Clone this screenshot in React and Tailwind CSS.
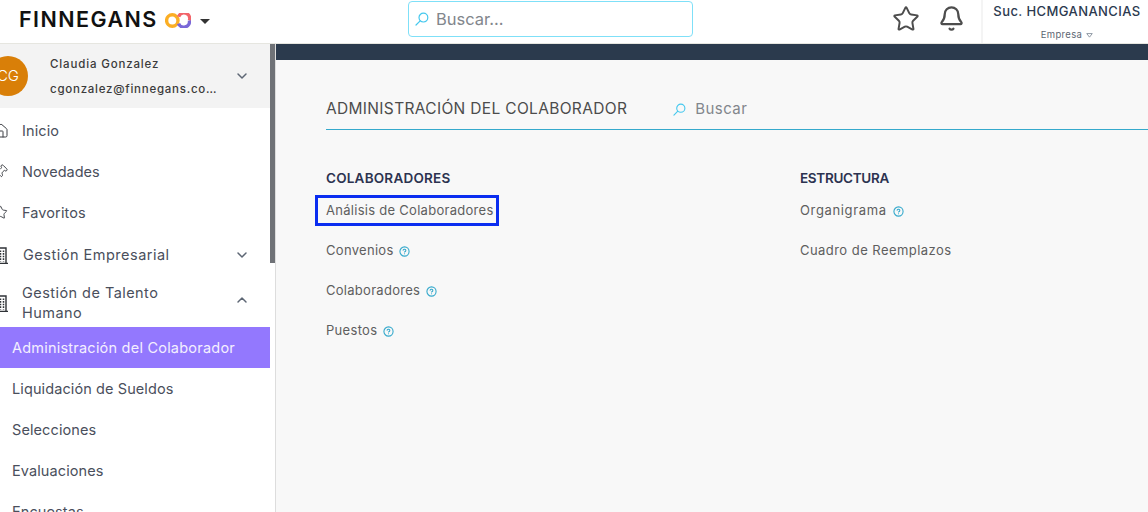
import React from "react";
import { Home, Pin, Star, Bell, ChevronDown, ChevronUp, CircleHelp } from "lucide-react";

function Lens({ className }) {
  return (
    <svg viewBox="0 0 14 14" fill="none" stroke="currentColor" strokeWidth="1.2" className={className}>
      <circle cx="8.4" cy="5.6" r="4.4" />
      <path d="M5.2 8.8 1 13" strokeLinecap="round" />
    </svg>
  );
}

function Logo() {
  return (
    <svg viewBox="0 0 26 15" className="h-[15px] w-[26px]" fill="none" strokeWidth="3.4">
      <circle cx="7.3" cy="7.5" r="5.7" stroke="#fbae24" />
      <path d="M13.6 3.8A5.7 5.7 0 0 1 24.4 7.5" stroke="#f2646a" />
      <path d="M24.4 7.5A5.7 5.7 0 0 1 13.5 10.6" stroke="#7a68d8" />
    </svg>
  );
}

function BuildingIcon({ className }) {
  return (
    <svg viewBox="0 0 15 17" className={className} fill="none" stroke="currentColor">
      <path d="M2 16.5V1h11v15.5M0 16.5h15" strokeWidth="1.4" />
      <path d="M4.5 3.5v11M7.5 3.5v11M10.5 3.5v11" strokeWidth="1.5" strokeDasharray="1.6 1" />
    </svg>
  );
}

function Row({ icon: Icon, label, labelClass = "tracking-[0.1px]", iconClass = "" }) {
  return (
    <div className="flex h-[41px] items-center text-[14.5px] text-[#4a4f5c]">
      <div className="ml-[-7px] flex w-[29px] shrink-0 items-center">
        <Icon className={`h-[15px] w-[15px] text-[#3c3f45] ${iconClass}`} strokeWidth={1.5} />
      </div>
      <span className={`min-w-0 flex-1 ${labelClass}`}>{label}</span>
    </div>
  );
}

function SubRow({ label, active }) {
  return (
    <div className={`flex h-[41px] items-center pl-3 text-[14.5px] ${active ? "bg-[#9378fe] tracking-[0.22px] text-[#f3efff]" : "tracking-[0.1px] text-[#4a4f5c]"}`}>
      {label}
    </div>
  );
}

function Item({ label, help, track = "tracking-[0.3px]", gap = "ml-[6px]" }) {
  return (
    <div className={`flex h-10 items-center text-[13px] text-[#5e5e5e] ${track}`}>
      <span>{label}</span>
      {help && <CircleHelp className={`${gap} h-[11px] w-[11px] text-[#35a9cc]`} strokeWidth={2.4} />}
    </div>
  );
}

export default function App() {
  return (
    <div className="flex h-[512px] w-[1148px] flex-col overflow-hidden bg-white font-['Inter',sans-serif]">
      <header className="flex h-[44px] shrink-0 items-stretch border-b border-[#e6e6e0] bg-white">
        <div className="flex w-[408px] shrink-0 items-center pl-[19px] pb-[3px]">
          <span className="text-[21.5px] font-semibold leading-none tracking-[1.45px] text-[#111111]">FINNEGANS</span>
          <span className="ml-[7px] flex"><Logo /></span>
          <span className="ml-[9px] mt-[2px] h-0 w-0 border-x-[5px] border-t-[5px] border-x-transparent border-t-[#333333]" />
        </div>
        <div className="mt-[1px] flex h-[36px] w-[285px] shrink-0 items-center rounded-[4px] border border-[#7fe0f8] bg-white pl-[6px]">
          <Lens className="h-[14px] w-[14px] text-[#45c8ee]" />
          <span className="ml-[7px] text-[16.5px] text-[#82868c]">Buscar...</span>
        </div>
        <div className="ml-[199px] flex w-[89px] shrink-0 items-center pb-[6px]">
          <Star className="h-[28px] w-[28px] text-[#4d4d4d]" strokeWidth={1.7} />
          <Bell className="ml-[18px] h-[27px] w-[27px] text-[#4d4d4d]" strokeWidth={2} />
        </div>
        <div className="flex flex-1 flex-col items-center border-l-2 border-[#f4f4f4] pl-[3px]">
          <span className="mt-[3px] whitespace-nowrap text-[13px] font-medium leading-[16px] tracking-[0.42px] text-[#2c3a4f]">Suc. HCMGANANCIAS</span>
          <span className="mt-[10px] flex items-center text-[9.5px] leading-[12px] tracking-[0.35px] text-[#5c6672]">
            Empresa
            <svg viewBox="0 0 8 6" className="ml-[4px] h-[5px] w-[7px]" fill="none" stroke="#7c8794"><path d="M.7.7h6.6L4 5z" /></svg>
          </span>
        </div>
      </header>

      <div className="flex min-h-0 flex-1">
        <aside className="relative w-[276px] shrink-0 overflow-hidden border-r border-[#dddddd] bg-white">
          <div className="absolute right-0 top-0 h-[219px] w-[5px] bg-[#6f7277]" />
          <div className="w-[270px]">
            <div className="flex h-[64px] items-center bg-[#f3f3f3]">
              <div className="ml-[-12px] flex h-[40px] w-[40px] shrink-0 items-center justify-center rounded-full bg-[#d97f08] text-[15px] font-light text-white">
                CG
              </div>
              <div className="ml-[22px] w-[168px] min-w-0 text-[11.5px] font-medium leading-[25px] text-[#3b3b3b]">
                <div className="mt-[1px] tracking-[0.85px]">Claudia Gonzalez</div>
                <div className="truncate tracking-[0.75px]">cgonzalez@finnegans.com.ar</div>
              </div>
              <ChevronDown className="ml-[16px] h-[16px] w-[16px] text-[#5d6674]" strokeWidth={2.2} />
            </div>
            <div className="pt-[2px]">
              <Row icon={Home} label="Inicio" iconClass="!h-[16px] !w-[16px]" />
              <Row icon={Pin} label="Novedades" iconClass="rotate-45" labelClass="tracking-[0px]" />
              <Row icon={Star} label="Favoritos" />
              <div className="flex h-[43px] items-center pt-[1px] text-[14.5px] text-[#4a4f5c]">
                <div className="ml-[-7px] flex w-[30px] shrink-0 items-center">
                  <BuildingIcon className="h-[17px] w-[15px] text-[#2f3237]" />
                </div>
                <span className="min-w-0 flex-1 tracking-[0.5px]">Gestión Empresarial</span>
                <ChevronDown className="mr-[20px] h-[16px] w-[16px] text-[#5d6674]" strokeWidth={2.2} />
              </div>
              <div className="flex h-[51px] items-center pt-[3px] text-[14.5px] leading-[20px] tracking-[0.45px] text-[#4a4f5c]">
                <div className="ml-[-7px] flex w-[29px] shrink-0 items-center">
                  <BuildingIcon className="h-[17px] w-[15px] text-[#2f3237]" />
                </div>
                <span className="w-[190px]">Gestión de Talento Humano</span>
                <ChevronUp className="ml-[22px] mb-[7px] h-[16px] w-[16px] text-[#5d6674]" strokeWidth={2.2} />
              </div>
            </div>
            <SubRow label="Administración del Colaborador" active />
            <SubRow label="Liquidación de Sueldos" />
            <SubRow label="Selecciones" />
            <SubRow label="Evaluaciones" />
            <SubRow label="Encuestas" />
          </div>
        </aside>

        <main className="min-w-0 flex-1 bg-[#f8f8f8]">
          <div className="h-[16px] bg-[#2b3a4d]" />
          <div className="pl-[50px]">
            <div className="mt-[22px] flex h-[48px] items-center border-b border-[#35a9cc] pt-[7px]">
              <span className="text-[15.5px] tracking-[0.33px] text-[#4c4c4c]">ADMINISTRACIÓN DEL COLABORADOR</span>
              <Lens className="ml-[46px] h-[13px] w-[13px] text-[#45c8ee]" />
              <span className="ml-[9px] text-[15px] tracking-[0.45px] text-[#82868c]">Buscar</span>
            </div>
            <div className="mt-[36px] grid grid-cols-[474px_1fr]">
              <section>
                <h2 className="h-[25px] text-[13.5px] font-semibold leading-[24px] tracking-[0.22px] text-[#2c3350]">COLABORADORES</h2>
                <div className="flex h-10 items-center text-[13px] tracking-[0.28px] text-[#5e5e5e]">
                  <span className="-ml-[11px] mb-[1px] flex h-[31px] items-center border-[3px] border-[#0a2df0] pl-[8px] pr-[2px]">Análisis de Colaboradores</span>
                </div>
                <Item label="Convenios" help gap="ml-[5px]" />
                <Item label="Colaboradores" help track="tracking-[0.28px]" />
                <Item label="Puestos" help />
              </section>
              <section>
                <h2 className="h-[25px] text-[13.5px] font-semibold leading-[24px] tracking-[-0.3px] text-[#2c3350]">ESTRUCTURA</h2>
                <Item label="Organigrama" help track="tracking-[0.65px]" />
                <Item label="Cuadro de Reemplazos" track="tracking-[0.45px]" />
              </section>
            </div>
          </div>
        </main>
      </div>
    </div>
  );
}
